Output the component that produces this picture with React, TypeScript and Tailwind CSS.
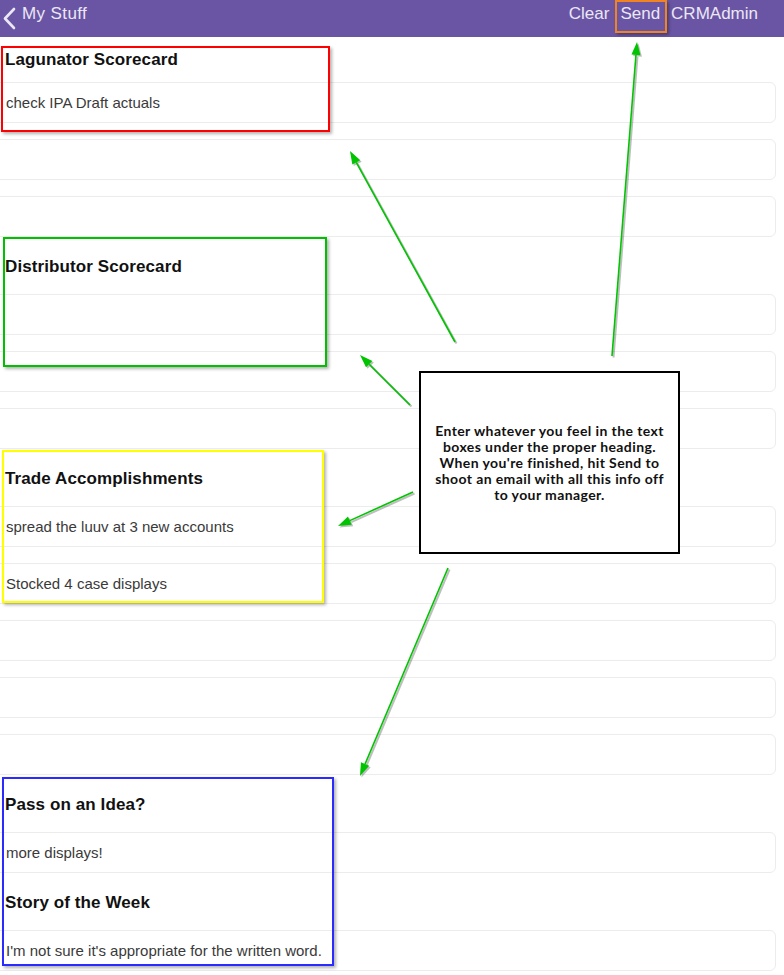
import React from 'react';

type Row = { kind: 'heading' | 'box'; text?: string; first?: boolean };

const ROWS: Row[] = [
  { kind: 'heading', text: 'Lagunator Scorecard', first: true },
  { kind: 'box', text: 'check IPA Draft actuals' },
  { kind: 'box' },
  { kind: 'box' },
  { kind: 'heading', text: 'Distributor Scorecard' },
  { kind: 'box' },
  { kind: 'box' },
  { kind: 'box' },
  { kind: 'heading', text: 'Trade Accomplishments' },
  { kind: 'box', text: 'spread the luuv at 3 new accounts' },
  { kind: 'box', text: 'Stocked 4 case displays' },
  { kind: 'box' },
  { kind: 'box' },
  { kind: 'box' },
  { kind: 'heading', text: 'Pass on an Idea?' },
  { kind: 'box', text: 'more displays!' },
  { kind: 'heading', text: 'Story of the Week' },
  { kind: 'box', text: "I'm not sure it's appropriate for the written word." },
];

// annotation arrows: from tail to tip
const ARROWS = [
  { x1: 455, y1: 342, x2: 350, y2: 151 },
  { x1: 612, y1: 356, x2: 637, y2: 42 },
  { x1: 410, y1: 405, x2: 360, y2: 355 },
  { x1: 413, y1: 492, x2: 338, y2: 526 },
  { x1: 448, y1: 568, x2: 360, y2: 776 },
];

function Arrow({ x1, y1, x2, y2 }: { x1: number; y1: number; x2: number; y2: number }) {
  const dx = x2 - x1;
  const dy = y2 - y1;
  const len = Math.hypot(dx, dy);
  const ux = dx / len;
  const uy = dy / len;
  const headLen = 13;
  const headW = 4.5;
  const bx = x2 - ux * headLen;
  const by = y2 - uy * headLen;
  const pts = `${x2},${y2} ${bx - uy * headW},${by + ux * headW} ${bx + uy * headW},${by - ux * headW}`;
  return (
    <g>
      <g transform="translate(1.5,1.5)" opacity="0.25">
        <line x1={x1} y1={y1} x2={bx} y2={by} stroke="#000" strokeWidth="2" />
        <polygon points={pts} fill="#000" />
      </g>
      <line x1={x1} y1={y1} x2={bx} y2={by} stroke="#00c400" strokeWidth="1.6" />
      <polygon points={pts} fill="#00c400" />
    </g>
  );
}

export default function App() {
  return (
    <div className="relative w-[784px] h-[975px] overflow-hidden bg-white font-['Liberation_Sans',Arial,sans-serif]">
      <div className="h-[37px] bg-[#6a55a4] flex items-start justify-between pt-[4px] text-[#ebe7f4] text-[17px] leading-[20px]">
        <div className="flex items-start">
          <svg width="22" height="30" viewBox="0 0 22 30" className="-mt-[1px]">
            <polyline points="14,6 5,15.5 14,25" fill="none" stroke="#ebe7f4" strokeWidth="2.6" strokeLinecap="round" strokeLinejoin="round" />
          </svg>
          <span className="tracking-[0.4px]">My Stuff</span>
        </div>
        <div className="flex gap-[11px] pr-[26px]">
          <span>Clear</span>
          <span>Send</span>
          <span>CRMAdmin</span>
        </div>
      </div>

      <div className="flex flex-col">
        {ROWS.map((r, i) =>
          r.kind === 'heading' ? (
            <div
              key={i}
              className={`${r.first ? 'h-[45px] pt-[13px]' : 'h-[41px] pt-[4px]'} pl-[5px] text-[17px] leading-[20px] font-bold text-[#111] tracking-[0.1px]`}
            >
              {r.text}
            </div>
          ) : (
            <div key={i} className="h-[57px]">
              <div className="-ml-[10px] w-[786px] h-[41px] border border-[#ececec] rounded-[6px] flex items-center pt-[2px] pl-[15px] text-[15px] text-[#3a3a3a]">
                {r.text}
              </div>
            </div>
          )
        )}
      </div>

      {/* annotation overlay */}
      <div className="absolute left-[1px] top-[46px] w-[329px] h-[86px] border-2 border-[#ff0000] shadow-[2px_2px_3px_rgba(0,0,0,0.3)]" />
      <div className="absolute left-[3px] top-[237px] w-[324px] h-[130px] border-2 border-[#00c000] shadow-[2px_2px_3px_rgba(0,0,0,0.3)]" />
      <div className="absolute left-[2px] top-[450px] w-[322px] h-[153px] border-2 border-[#ffff00] shadow-[2px_2px_3px_rgba(0,0,0,0.3)]" />
      <div className="absolute left-[2px] top-[777px] w-[332px] h-[189px] border-2 border-[#2b2bff] shadow-[2px_2px_3px_rgba(0,0,0,0.3)]" />
      <div className="absolute left-[615px] top-0 w-[52px] h-[33px] border-2 border-[#f08423] shadow-[2px_2px_3px_rgba(0,0,0,0.3)]" />

      <svg className="absolute inset-0 pointer-events-none" width="784" height="975">
        {ARROWS.map((a, i) => (
          <Arrow key={i} {...a} />
        ))}
      </svg>

      <div className="absolute left-[419px] top-[371px] w-[261px] h-[183px] border-2 border-black bg-white flex items-center justify-center text-center font-['Lato',sans-serif] font-bold text-[14px] leading-[16px] tracking-[0.4px] text-[#111]">
        <p>
          Enter whatever you feel in the text
          <br />
          boxes under the proper heading.
          <br />
          When you're finished, hit Send to
          <br />
          shoot an email with all this info off
          <br />
          to your manager.
        </p>
      </div>
    </div>
  );
}
